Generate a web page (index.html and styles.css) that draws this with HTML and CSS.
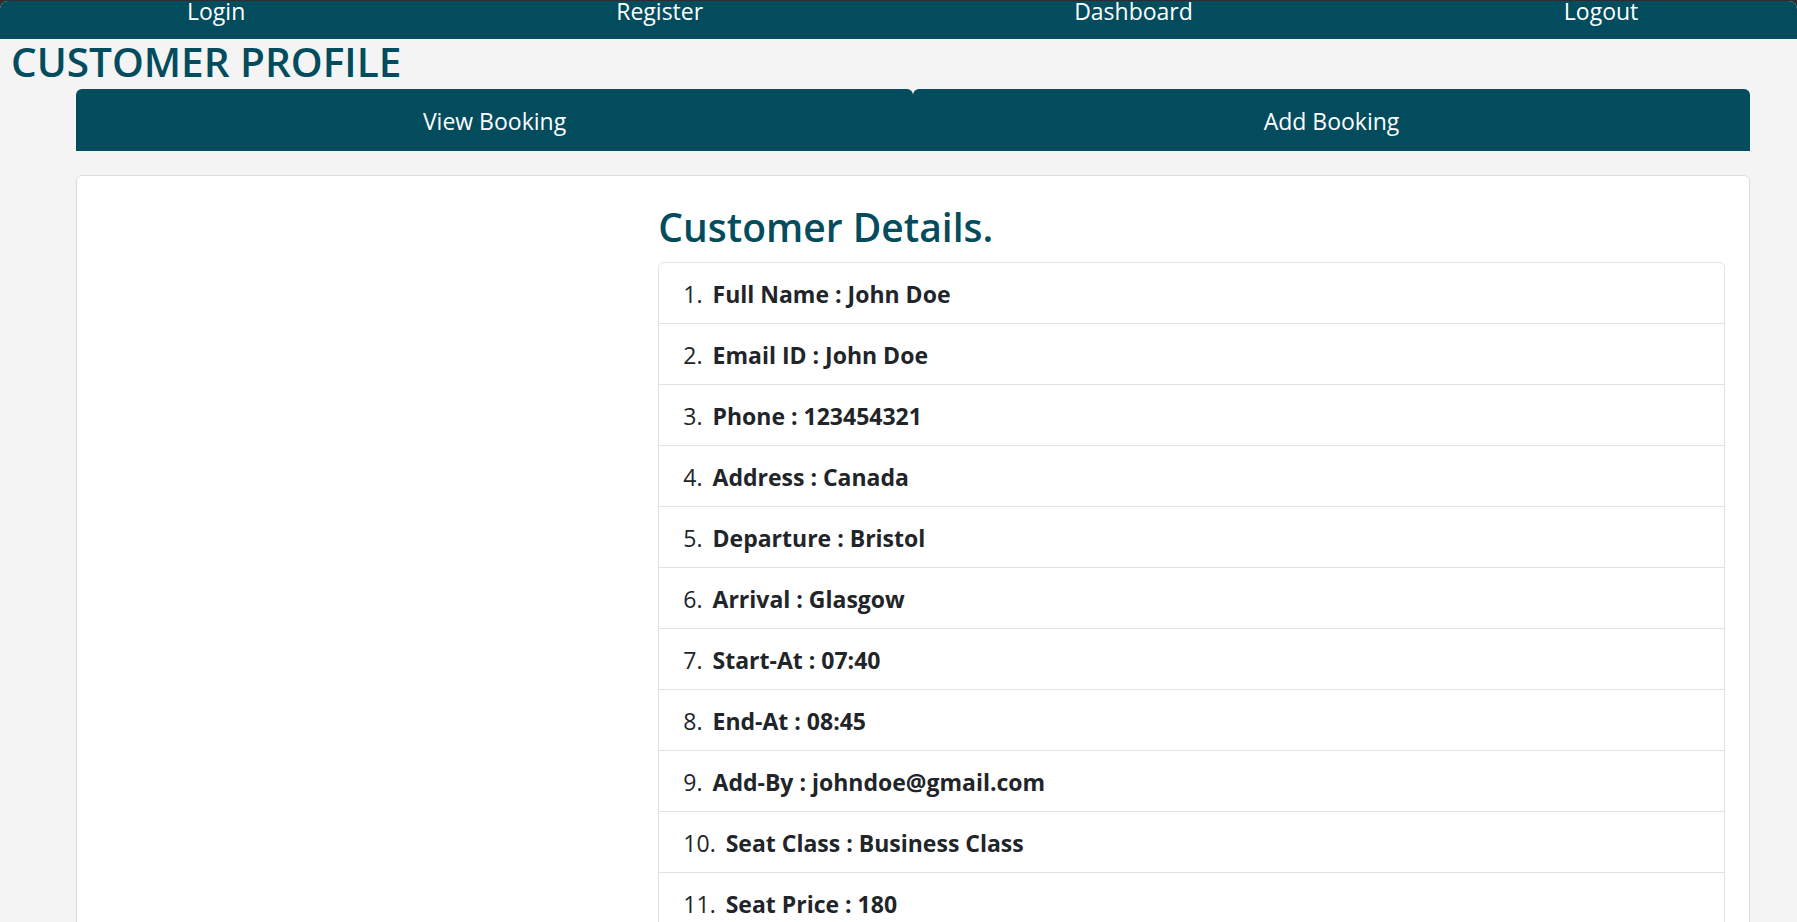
FILE: index.html
```html
<!DOCTYPE html>
<html lang="en">
<head>
<meta charset="utf-8">
<title>Customer Profile</title>
<link rel="stylesheet" href="styles.css">
</head>
<body>
<div class="window">
  <nav class="topnav">
    <a class="topnav-link" href="#">Login</a>
    <a class="topnav-link" href="#">Register</a>
    <a class="topnav-link" href="#">Dashboard</a>
    <a class="topnav-link" href="#">Logout</a>
  </nav>
  <h4 class="page-title">CUSTOMER PROFILE</h4>
  <main class="main">
    <div class="tabs">
      <a class="tab" href="#">View Booking</a>
      <a class="tab" href="#">Add Booking</a>
    </div>
    <section class="card">
      <div class="card-body">
        <div class="card-side"></div>
        <div class="card-content">
          <h3 class="details-title">Customer Details.</h3>
          <ol class="details-list">
            <li class="details-item"><b>Full Name : John Doe</b></li>
            <li class="details-item"><b>Email ID : John Doe</b></li>
            <li class="details-item"><b>Phone : 123454321</b></li>
            <li class="details-item"><b>Address : Canada</b></li>
            <li class="details-item"><b>Departure : Bristol</b></li>
            <li class="details-item"><b>Arrival : Glasgow</b></li>
            <li class="details-item"><b>Start-At : 07:40</b></li>
            <li class="details-item"><b>End-At : 08:45</b></li>
            <li class="details-item"><b>Add-By : johndoe@gmail.com</b></li>
            <li class="details-item"><b>Seat Class : Business Class</b></li>
            <li class="details-item"><b>Seat Price : 180</b></li>
          </ol>
        </div>
      </div>
    </section>
  </main>
</div>
</body>
</html>
```

FILE: styles.css
```css
* { box-sizing: border-box; }

html, body {
  margin: 0;
  padding: 0;
  background: #2e2e2e;
}

body {
  font-family: "Open Sans", "Noto Sans", sans-serif;
  color: #212529;
}

.window {
  background: #f4f4f4;
  margin-top: 1px;
  border-radius: 8px 8px 0 0;
  min-height: 1100px;
  overflow: hidden;
}

.topnav {
  height: 38px;
  background: #024c5e;
  display: flex;
  align-items: flex-start;
  gap: 371px;
  padding-left: 187px;
}

.topnav-link {
  color: #ffffff;
  text-decoration: none;
  font-size: 23px;
  line-height: 21px;
}

.page-title {
  margin: 0;
  padding: 3px 0 0 11px;
  height: 50px;
  font-size: 40.5px;
  line-height: 40px;
  font-weight: 600;
  color: #024c5e;
}

.main {
  padding: 0 47px 0 76px;
}

.tabs {
  display: flex;
  height: 62px;
}

.tab {
  flex: 1;
  display: flex;
  align-items: center;
  justify-content: center;
  padding-top: 2px;
  background: #024c5e;
  color: #ffffff;
  text-decoration: none;
  font-size: 23px;
  border-radius: 6px 6px 0 0;
}

.card {
  margin-top: 24px;
  background: #ffffff;
  border: 1px solid #dcdcdc;
  border-radius: 6px;
}

.card-body {
  padding: 24px;
  display: grid;
  grid-template-columns: 1fr 2fr;
  column-gap: 24px;
}

.details-title {
  margin: 0 0 10px;
  padding-top: 2px;
  font-size: 39px;
  line-height: 50px;
  font-weight: 600;
  color: #024c5e;
}

.details-list {
  list-style: none;
  margin: 0;
  padding: 0;
  counter-reset: item;
  border: 1px solid #dee2e6;
  border-radius: 6px;
}

.details-item {
  counter-increment: item;
  padding: 13px 24px 11px;
  font-size: 23px;
  line-height: 36px;
  border-bottom: 1px solid #dee2e6;
}

.details-item::before {
  content: counter(item) ".";
  margin-right: 10px;
}

.details-item b {
  font-weight: 700;
}
```
